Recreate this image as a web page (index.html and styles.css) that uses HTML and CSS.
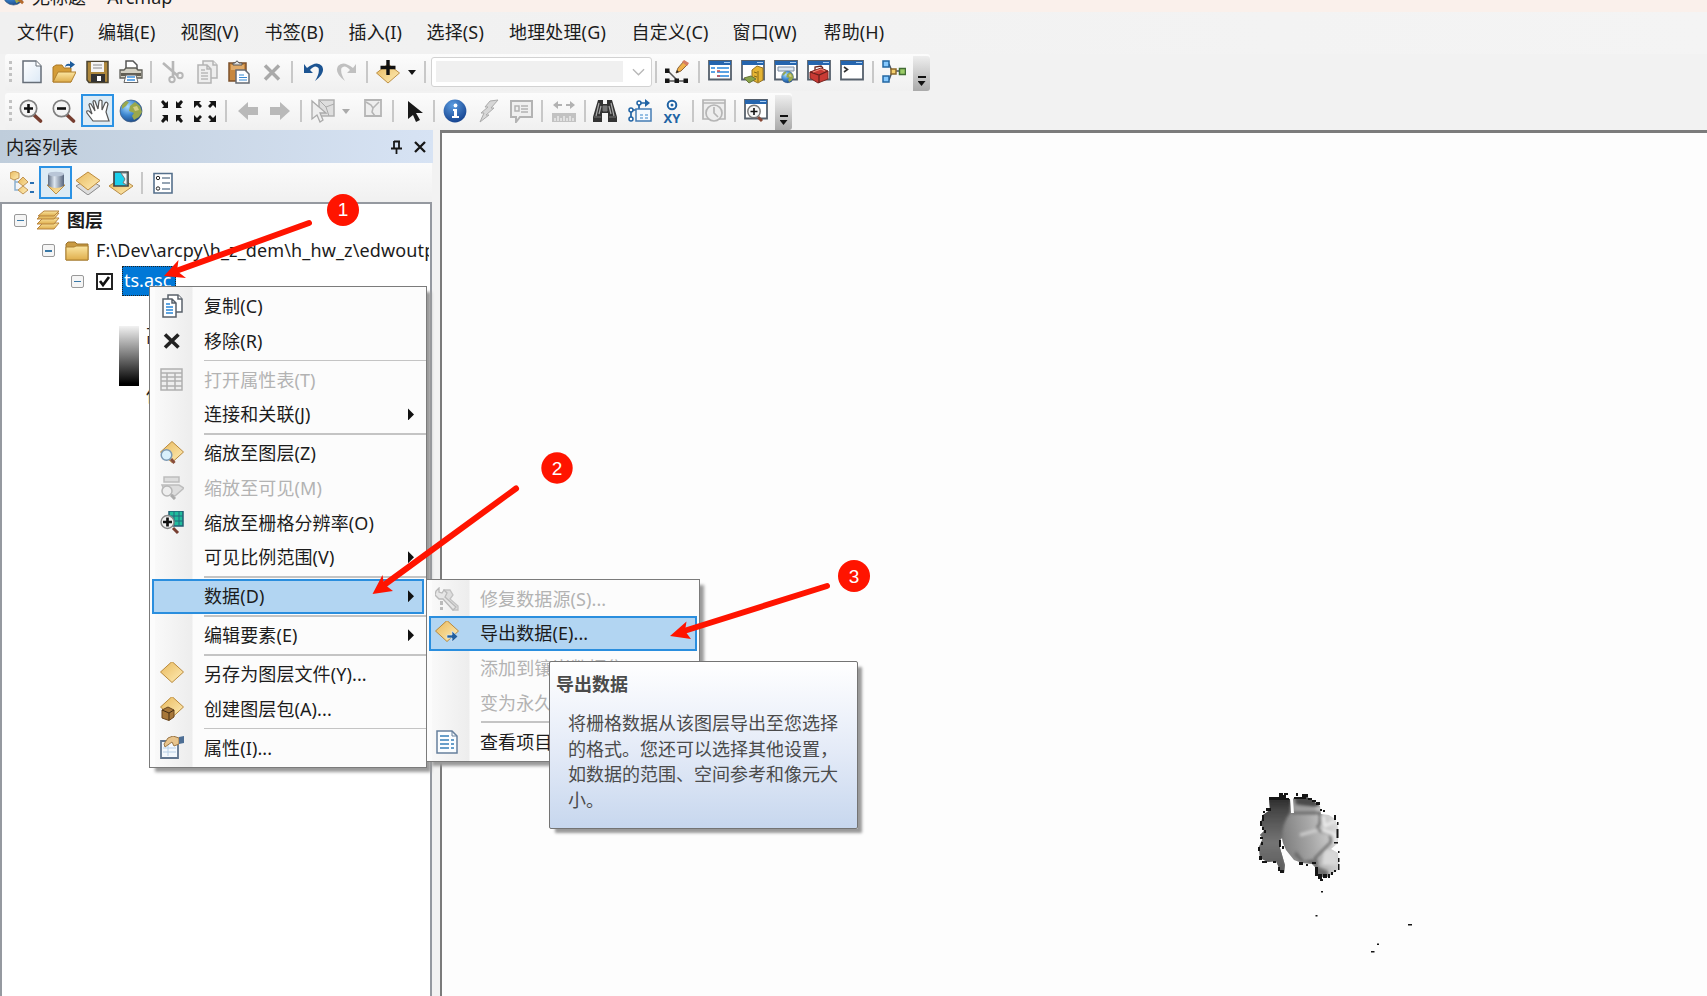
FILE: index.html
```html
<!DOCTYPE html>
<html lang="zh-CN">
<head>
<meta charset="utf-8">
<title>无标题 - Arcmap</title>
<link rel="stylesheet" href="styles.css">
</head>
<body>
<svg class="defs" width="0" height="0">
  <defs>
    <linearGradient id="gold" x1="0" y1="0" x2="1" y2="1"><stop offset="0" stop-color="#e8b85c"/><stop offset="1" stop-color="#ffeeb8"/></linearGradient>
    <linearGradient id="fold" x1="0" y1="0" x2="0" y2="1"><stop offset="0" stop-color="#fbe6a2"/><stop offset="1" stop-color="#dfae4c"/></linearGradient>
    <linearGradient id="paper" x1="0" y1="0" x2="1" y2="1"><stop offset="0" stop-color="#fff"/><stop offset="1" stop-color="#dce9f6"/></linearGradient>
    <linearGradient id="steel" x1="0" y1="0" x2="1" y2="0"><stop offset="0" stop-color="#5d6b80"/><stop offset=".4" stop-color="#dde6f0"/><stop offset="1" stop-color="#56657c"/></linearGradient>
    <radialGradient id="sea" cx=".35" cy=".3" r=".8"><stop offset="0" stop-color="#a9dcff"/><stop offset=".5" stop-color="#3d86cf"/><stop offset="1" stop-color="#153f7c"/></radialGradient>
    <radialGradient id="blue" cx=".4" cy=".25" r=".8"><stop offset="0" stop-color="#5a9be0"/><stop offset="1" stop-color="#123f8c"/></radialGradient>
    <symbol id="diamond" viewBox="0 0 24 24"><path d="M12 1.500 23.500 12 12 22.500 .5 12Z" fill="url(#gold)" stroke="#b8893c"/></symbol>
    <symbol id="globe" viewBox="0 0 24 24"><circle cx="12" cy="12" r="11" fill="url(#sea)" stroke="#3b587c" stroke-width=".7"/><path d="M11 7l5-4 5 4 2 6-3 5-5 3-2-4 2-3-5-2zM3 6l4-4 3 1-3 4-4 3z" fill="#9aa84c"/><path d="M14 8l4-1 2 4-4 1z" fill="#d4cf83"/></symbol>
    <symbol id="window" viewBox="0 0 24 24"><path d="M1 1H23V19.500H1Z" fill="#fff" stroke="#56606c" stroke-width="1.800"/><path d="M1 1H23V5H1Z" fill="#2565ae"/><path d="M16 2.500H22" stroke="#a9cdf2"/></symbol>
    <symbol id="lens" viewBox="0 0 24 24"><path d="M14 15 21.500 22" stroke="#773e30" stroke-width="3.600" stroke-linecap="round"/><circle cx="9.500" cy="9.500" r="8.200" fill="#f5f5f5" stroke="#808080" stroke-width="1.700"/></symbol>
    <symbol id="pages" viewBox="0 0 24 24"><path d="M8 1H18L22 5V18H8Z"/><path d="M3 5H12L16 9V23H3ZM12 5V9H16M18 1V5H22"/><path class="ink" d="M6 10H10M6 13H13M6 16H13M6 19H13"/></symbol>
  </defs>
</svg>

<div class="app">
  <header class="titlebar">
    <svg class="title-icon" viewBox="0 0 24 24"><use href="#globe"/><path d="M14 14 22 21" stroke="#b66b2d" stroke-width="3"/></svg>
    <span>无标题 - Arcmap</span>
  </header>

  <nav class="menubar">
    <span>文件(F)</span><span>编辑(E)</span><span>视图(V)</span><span>书签(B)</span><span>插入(I)</span><span>选择(S)</span><span>地理处理(G)</span><span>自定义(C)</span><span>窗口(W)</span><span>帮助(H)</span>
  </nav>

  <div class="toolbar standard">
    <i class="grip"></i>
    <svg class="ic" viewBox="0 0 24 24"><path d="M3 1H16L21 6V22.500H3Z" fill="url(#paper)" stroke="#666e78" stroke-width="1.500"/><path d="M16 1V6H21" fill="#fff" stroke="#666e78"/></svg>
    <svg class="ic" viewBox="0 0 24 24"><path d="M1 22V7L4 5H10L12 8H19V22Z" fill="#d49c37" stroke="#a97725"/><path d="M1 22 6 12H24L19 22Z" fill="url(#fold)" stroke="#b07f2c"/><path d="M13 7Q14 3 18 4V1L23 4.500 18 8.500V6Q15 5 13 7Z" fill="#1c5c9c"/></svg>
    <svg class="ic" viewBox="0 0 24 24"><path d="M1 1.500H22V22.500H3L1 20Z" fill="#ad873c" stroke="#4b432f" stroke-width="1.500"/><path d="M5 2H18V12H5Z" fill="#f5f5f5"/><path d="M7 5H16M7 8H16" stroke="#888"/><path d="M5 14H19V22H5Z" fill="#333"/><path d="M11 16H15V21H11Z" fill="#fff"/></svg>
    <svg class="ic" viewBox="0 0 24 24"><path d="M7 10V1H14L18 5V10" fill="#fff" stroke="#555" stroke-width="1.500"/><path d="M1 10H5L7 8H17L19 10H23V18H1Z" fill="#d4d1c4" stroke="#5e5d57" stroke-width="1.300"/><path d="M2 13H22V16H2Z" fill="#625f54"/><path d="M7 15H17L19 22.500H5Z" fill="#fff" stroke="#666"/><path d="M8 17H16M8 20H16" stroke="#3b8fdc" stroke-width="1.500"/></svg>
    <i class="sep"></i>
    <svg class="ic" viewBox="0 0 24 24" fill="none" stroke="#b7b7b7" stroke-width="2"><path d="M2 3 17 16M12 1 12 18" stroke-width="2.600"/><circle cx="11" cy="19.500" r="2.700"/><circle cx="19" cy="15.500" r="2.700"/></svg>
    <svg class="ic pages-off" viewBox="0 0 24 24"><use href="#pages"/></svg>
    <svg class="ic" viewBox="0 0 24 24"><path d="M2 3H19V21H2Z" fill="#c8873c" stroke="#7c512c" stroke-width="1.500"/><path d="M4 5H17V10H4Z" fill="#e0aa68"/><path d="M6 5V3H8Q10-1 12 3H15V5Z" fill="#ddd" stroke="#555"/><path d="M9 10H18L22 14V23H9Z" fill="#fff" stroke="#656b73" stroke-width="1.500"/><path d="M12 15H17M12 17.500H20M12 20H20" stroke="#3989d2" stroke-width="1.200"/></svg>
    <svg class="ic" viewBox="0 0 24 24"><path d="M5 5.500 19 19.500M19 5.500 5 19.500" stroke="#a9a9a9" stroke-width="3.500"/></svg>
    <i class="sep"></i>
    <svg class="ic" viewBox="0 0 24 24"><path d="M3 4V13H12L9 10Q14 4 17.500 8Q19 13 14 21Q25 13 21 6Q16 0 6 8Z" fill="#1c5492"/></svg>
    <svg class="ic" viewBox="0 0 24 24"><path d="M21 4V13H12L15 10Q10 4 6.500 8Q5 13 10 21Q-1 13 3 6Q8 0 18 8Z" fill="#c0c0c0"/></svg>
    <i class="sep"></i>
    <svg class="ic" viewBox="0 0 24 24"><path d="M12 4 23.500 13 12 23 .5 13Z" fill="url(#gold)" stroke="#bd9046"/><path d="M12 0V15M4.500 7.500H19.500" stroke="#111" stroke-width="3.400"/></svg>
    <i class="caret"></i>
    <i class="sep"></i>
    <div class="combo"><span></span><svg viewBox="0 0 14 10"><path d="M1 2 7 8 13 2" fill="none" stroke="#b8b8b8" stroke-width="1.500"/></svg></div>
    <i class="sep"></i>
    <svg class="ic" viewBox="0 0 24 24"><path d="M2 10 12 20M2 21H21" fill="none" stroke="#555" stroke-width="1.500"/><path d="M0 8.500H4.500V13H0ZM0 18.500H4.500V23H0ZM9.500 18.500H14V23H9.500ZM18.500 18.500H23V23H18.500Z" fill="#151515"/><path d="M11 13 13 8 19 1 23 4 16 11Z" fill="#f0b14a" stroke="#8c653b"/><path d="M19 0 24 3 22 6 17 2Z" fill="#d67d62"/><path d="M11 13 12 10 14 12Z" fill="#222"/></svg>
    <i class="sep"></i>
    <svg class="ic" viewBox="0 0 24 24"><use href="#window"/><path d="M3 8H7M9 8H21M9 12H21M9 16H21M3 12H7" stroke="#2685dc" stroke-width="1.600"/><path d="M9 11H12M9 16H12" stroke="#d14b4b" stroke-width="1.700"/></svg>
    <svg class="ic" viewBox="0 0 24 24"><use href="#window"/><path d="M11 10 16 6 22 8V20L17 23 11 20Z" fill="#e5b433" stroke="#967322"/><path d="M17 11V22M13 12 16 13M13 16 16 17" stroke="#856714"/><path d="M3 18 10 16 15 19 8 23Z" fill="#88a34a" stroke="#68743c"/></svg>
    <svg class="ic" viewBox="0 0 24 24"><use href="#window"/><path d="M4 7H20V11H4Z" fill="#dce7f2" stroke="#7c8ca1"/><use href="#globe" x="7" y="10.500" width="13" height="13"/></svg>
    <svg class="ic" viewBox="0 0 24 24"><use href="#window"/><path d="M3 12 14 8 21 11V19L11 23 3 18Z" fill="#c93a34" stroke="#7d2722"/><path d="M3 12 12 15 21 11M12 15V23M8 10V7L14 6 16 8" fill="none" stroke="#66211d" stroke-width="1.300"/><path d="M6 12 14 9 18 11" fill="none" stroke="#f18b78"/></svg>
    <svg class="ic" viewBox="0 0 24 24"><use href="#window"/><path d="M4 7 7.500 9.500 4 12" fill="none" stroke="#333" stroke-width="1.600"/></svg>
    <i class="sep"></i>
    <svg class="ic" viewBox="0 0 24 24"><path d="M7 4 10 11H19M7 20 10 12" fill="none" stroke="#4c5561" stroke-width="1.500"/><path d="M1 1H7V7H1ZM1 16H7V22H1Z" fill="#85c9ff" stroke="#2367a3" stroke-width="1.500"/><path d="M9 9H14V14H9Z" fill="#f4cf6c" stroke="#8b692c" stroke-width="1.500"/><path d="M17.500 8.500H23.500V14.500H17.500Z" fill="#9acb66" stroke="#426c35" stroke-width="1.500"/></svg>
    <i class="overflow"></i>
  </div>

  <div class="toolbar tools">
    <i class="grip"></i>
    <svg class="ic" viewBox="0 0 24 24"><use href="#lens"/><path d="M9.500 5V14M5 9.500H14" stroke="#111" stroke-width="2.600"/></svg>
    <svg class="ic" viewBox="0 0 24 24"><use href="#lens"/><path d="M5 9.500H14" stroke="#111" stroke-width="2.600"/></svg>
    <span class="pressed"><svg class="ic" viewBox="0 0 24 24"><path d="M7 22 1 14Q0 11 3 12L6 15 3 6Q3 4 5 5L9 12 7 3Q7 1 9 2L12 10 13 2Q14 0 16 2L16 11 19 4Q21 2 22 5L20 13 23 22Z" fill="#fff" stroke="#555" stroke-width="1.200"/></svg></span>
    <svg class="ic" viewBox="0 0 24 24"><use href="#globe"/></svg>
    <i class="sep"></i>
    <svg class="ic" viewBox="0 0 24 24" fill="#151515"><path id="corner-in" d="M1 3 3 1 6 4 8 2V9H2L4 7Z"/><use href="#corner-in" transform="matrix(-1 0 0 1 24 0)"/><use href="#corner-in" transform="matrix(1 0 0 -1 0 25)"/><use href="#corner-in" transform="matrix(-1 0 0 -1 24 25)"/></svg>
    <svg class="ic" viewBox="0 0 24 24" fill="#151515"><path id="corner-out" d="M1 2H8L6 4 9 7 7 9 4 6 1 9Z"/><use href="#corner-out" transform="matrix(-1 0 0 1 24 0)"/><use href="#corner-out" transform="matrix(1 0 0 -1 0 25)"/><use href="#corner-out" transform="matrix(-1 0 0 -1 24 25)"/></svg>
    <i class="sep"></i>
    <svg class="ic" viewBox="0 0 24 24"><path d="M2 12 12 3V8H22V16H12V21Z" fill="#b9b9b9"/></svg>
    <svg class="ic" viewBox="0 0 24 24"><path d="M22 12 12 3V8H2V16H12V21Z" fill="#b9b9b9"/></svg>
    <i class="sep"></i>
    <svg class="ic" viewBox="0 0 24 24"><path d="M8 1H23V17H8Z" fill="#dedede" stroke="#b0b0b0" stroke-width="1.500"/><path d="M8 1 15 8 23 5M15 8 18 17" fill="none" stroke="#aaa"/><path d="M1 2 15 14H9L12 21 9 23 6 16 1 20Z" fill="#eee" stroke="#aaa" stroke-width="1.300"/></svg>
    <i class="caret off"></i>
    <svg class="ic" viewBox="0 0 24 24"><path d="M4 1H20V17H4Z" fill="#eee" stroke="#b5b5b5" stroke-width="1.800"/><path d="M5 3 10 6 12 9 18 3M12 9 11 13 14 17" fill="none" stroke="#b5b5b5" stroke-width="1.500"/></svg>
    <i class="sep"></i>
    <svg class="ic" viewBox="0 0 24 24"><path d="M5 2 20 14H13L17 21 13 23 10 16 5 20Z" fill="#191919"/></svg>
    <i class="sep"></i>
    <svg class="ic" viewBox="0 0 24 24"><circle cx="12" cy="12" r="11.400" fill="url(#blue)"/><path d="M10 10H14V17H16V19H9V17H11V12H10Z" fill="#fff"/><circle cx="12.500" cy="6.500" r="1.900" fill="#fff"/></svg>
    <svg class="ic" viewBox="0 0 24 24"><path d="M13 2 21 1 14 9H17L9 16H12L3 23 7 14H4L11 8H8Z" fill="#d7d7d7" stroke="#ababab"/></svg>
    <svg class="ic" viewBox="0 0 24 24"><path d="M2 2H23V18H11L7 23V18H2Z" fill="#efefef" stroke="#b3b3b3" stroke-width="2"/><path d="M6 7H10V12H6ZM12 7H19M12 10H19M12 13H19" fill="none" stroke="#b3b3b3" stroke-width="1.500"/></svg>
    <i class="sep"></i>
    <svg class="ic" viewBox="0 0 24 24"><path d="M1 6 6 2V5H10V7H6V10ZM23 6 18 2V5H14V7H18V10Z" fill="#b2b2b2"/><path d="M0 14H24V23H0Z" fill="#c2c2c2"/><path d="M3 22V19M6 22V17M9 22V19M12 22V17M15 22V19M18 22V17M21 22V19" stroke="#fff"/></svg>
    <i class="sep"></i>
    <svg class="ic" viewBox="0 0 24 24"><path d="M5 1H10V5H14V1H19L24 18V23H15V14H9V23H0V18Z" fill="#333"/><path d="M6 4 3 17M18 4 21 17M8 7 6 15M16 7 18 15" stroke="#aaa" stroke-width="1.200"/><path d="M10 7H14V12H10ZM1 18H8M16 18H23" fill="#777" stroke="#777"/></svg>
    <svg class="ic" viewBox="0 0 24 24"><path d="M3 20V11H11V4H19" fill="none" stroke="#2063a4" stroke-width="1.700"/><path d="M17 0 22 4 17 8Z" fill="#2063a4"/><g fill="#fff" stroke="#2063a4" stroke-width="1.500"><circle cx="3" cy="20" r="2"/><circle cx="3" cy="11" r="2"/><circle cx="11" cy="4" r="2"/></g><path d="M8 10H23V22H8Z" fill="#f5faff" stroke="#447cb4" stroke-width="1.500"/><path d="M12 16H15M17 16H20M12 19H15M17 19H20" stroke="#3684c9"/></svg>
    <svg class="ic" viewBox="0 0 24 24"><circle cx="12" cy="6" r="4.300" fill="#fff" stroke="#2063a4" stroke-width="2"/><circle cx="12" cy="6" r="1.500" fill="#2063a4"/><text class="xy" x="12" y="23.500" text-anchor="middle">XY</text></svg>
    <i class="sep"></i>
    <svg class="ic" viewBox="0 0 24 24" fill="#eee" stroke="#b5b5b5" stroke-width="1.700"><path d="M1 1H23V20H1ZM1 4H23"/><circle cx="12" cy="14" r="8"/><path d="M12 8V14L16 18" fill="none"/></svg>
    <i class="sep"></i>
    <svg class="ic" viewBox="0 0 24 24"><use href="#window"/><path d="M14 18 18 22" stroke="#8a4938" stroke-width="3"/><circle cx="10" cy="12.500" r="6.200" fill="#f5f5f5" stroke="#777" stroke-width="1.400"/><path d="M10 9V16M6.500 12.500H13.500" stroke="#111" stroke-width="1.600"/></svg>
    <i class="overflow"></i>
  </div>

  <main class="workspace">
    <aside class="toc">
      <div class="toc-head"><span>内容列表</span>
        <svg class="pin" viewBox="0 0 12 14"><path d="M3 1V8M3 1.500H9M8 1V8M0 8.500H11M5.500 9V14" fill="none" stroke="#171717" stroke-width="1.800"/></svg>
        <svg class="close" viewBox="0 0 12 12"><path d="M1 1 11 11M11 1 1 11" stroke="#171717" stroke-width="2.300"/></svg>
      </div>
      <div class="toc-tools">
        <svg class="ic" viewBox="0 0 24 24"><path d="M5 8V19H12M5 11H12" fill="none" stroke="#8cb0d0" stroke-width="1.500"/><path d="M20 12H24M20 21H24" stroke="#2a70b2" stroke-width="2"/><g fill="url(#gold)" stroke="#c19555"><path d="M4 0 9 2V7L4 9 0 7V2Z"/><path d="M13 6 18 11 13 15 8 11ZM13 15 18 19 13 23 8 19Z"/></g></svg>
        <span class="pressed"><svg class="ic" viewBox="0 0 24 24"><path d="M3 14H21L12 23Z" fill="url(#gold)" stroke="#bd9046"/><path d="M4 3Q12-1 20 3V15Q12 19 4 15Z" fill="url(#steel)"/><ellipse cx="12" cy="3" rx="8" ry="2.300" fill="#b9c6d7"/></svg></span>
        <svg class="ic" viewBox="0 0 24 24"><path d="M0 15 12 24 24 15 12 8Z" fill="#ddd" stroke="#888"/><path d="M0 9.500 12 19 24 9.500 12 1Z" fill="url(#gold)" stroke="#bd8a3c"/></svg>
        <svg class="ic" viewBox="0 0 24 24"><path d="M0 15 12 23.500 24 15 18 11H6Z" fill="url(#gold)" stroke="#b78c48"/><path d="M5 1H19V15H5Z" fill="#1bd0ed" stroke="#444" stroke-width="1.700"/><path d="M12 2H18V14L14 12 16 8Z" fill="#eef3f5" stroke="#777"/></svg>
        <i class="sep"></i>
        <svg class="ic" viewBox="0 0 24 24"><path d="M3 2.500H21V22H3Z" fill="#fff" stroke="#55708c" stroke-width="1.600"/><path d="M11 7H19M11 12H19M11 18H19" stroke="#73879b" stroke-width="1.600"/><circle cx="7" cy="7" r="1.700" fill="none" stroke="#222"/><circle cx="7" cy="17.500" r="1.700" fill="none" stroke="#222"/></svg>
      </div>
      <div class="tree">
        <div class="row r1"><i class="minus"></i>
          <svg class="ic" viewBox="0 0 24 24"><g fill="url(#fold)" stroke="#b88540"><path d="M1 21 7 15H23L18 21Z"/><path d="M1 16 7 10H23L18 16Z"/><path d="M1 11 7 5H23L18 11Z"/><path d="M2 8 8 3H23L18 8Z"/></g></svg><b>图层</b></div>
        <div class="row r2"><i class="minus"></i>
          <svg class="ic" viewBox="0 0 24 24"><path d="M1 21V5L3 3H10L12 5H23V21Z" fill="#c99a42" stroke="#98702a"/><path d="M1 8H9L11 7H23V21H1Z" fill="url(#fold)" stroke="#ad8130"/></svg><span class="path">F:\Dev\arcpy\h_z_dem\h_hw_z\edwoutput</span></div>
        <div class="row r3"><i class="minus"></i>
          <svg class="check" viewBox="0 0 17 17"><path d="M1 1H16V16H1Z" fill="#fff" stroke="#222" stroke-width="2"/><path d="M4 8 7 12 13 4" fill="none" stroke="#111" stroke-width="2.700"/></svg><span class="selected">ts.asc</span></div>
        <div class="legend"><i class="ramp"></i><div><span>高</span><span>低</span></div></div>
      </div>
    </aside>
    <section class="map">
      <svg class="raster" viewBox="-10 -5 200 190">
        <defs>
          <linearGradient id="dem" gradientUnits="userSpaceOnUse" x1="30" y1="45" x2="88" y2="35"><stop offset="0" stop-color="#7d7d7d"/><stop offset=".5" stop-color="#a8a8a8"/><stop offset="1" stop-color="#dedede"/></linearGradient>
          <linearGradient id="west" x1="0" y1="0" x2="0" y2="1"><stop offset="0" stop-color="#1c1c1c"/><stop offset=".25" stop-color="#4a4a4a"/><stop offset=".6" stop-color="#747474"/><stop offset="1" stop-color="#555"/></linearGradient>
          <filter id="soft"><feGaussianBlur stdDeviation="1.500"/></filter>
          <clipPath id="land"><path d="M19 13H29V10H36V14H40L41 28H44L43 14 45 12H57L62 15 70 21 71 29 79 30 85 34 88 42V58L81 64 88 68 89 84 83 88 78 92 69 92 66 83 62 79 52 78 44 75 36 65 33 58 32 53 30 55V63L35 80 34 88 30 85 26 76 18 77 10 73 9 62 13 53 10 50 14 46 11 38 13 30 20 25Z"/></clipPath>
        </defs>
        <g clip-path="url(#land)">
          <path d="M0 0H100V100H0Z" fill="url(#dem)"/>
          <g filter="url(#soft)">
            <path d="M0 6H42L40 28Q32 38 32 52L36 92H0Z" fill="url(#west)"/>
            <path d="M44 8H60L70 20 64 22 46 20Z" fill="#4c4c4c"/>
            <path d="M46 20 66 24V29H44Z" fill="#9d9d9d"/>
            <path d="M44 70 50 76 64 80 66 92H78V86L68 82 64 74 54 76 46 66Z" fill="#6b6b6b"/>
            <path d="M74 64 86 66 88 80 72 80Z" fill="#d8d8d8"/>
          </g>
          <g fill="none" filter="url(#soft)"><path d="M42 28H70V38L67 43 70 46 80 49 81 57 73 65 65 73 67 79" stroke="#5a5a5a" stroke-width="2"/><path d="M73 31 75 41 85 36M72 45 86 50V60" stroke="#ececec" stroke-width="3"/><path d="M50 50 68 45" stroke="#cfcfcf" stroke-width="3"/></g>
        </g>
        <path d="M19 12H29V10H36V13H39V15H19ZM29 8H33V10H29ZM34 8H38V10H34ZM46 8H48V11H46ZM52 9H58V12H52ZM44 12H56V14H44ZM58 13H62V15H58ZM62 15H66V17H62ZM66 17H70V20H66ZM70 24H72V26H70ZM73 25H75V27H73ZM16 23H21V26H16ZM13 26H15V28H13ZM12 30H14V36H12ZM10 36H12V41H10ZM12 42H14V45H12ZM14 45H16V48H14ZM10 52H13V54H10ZM11 57H13V60H11ZM8 62H10V66H8ZM9 71H12V75H9ZM12 76H17V78H12ZM23 76H26V78H23ZM28 82H30V86H28ZM30 85H34V88H30ZM29 55H31V62H29ZM32 61H34V64H32ZM49 77H53V80H49ZM56 79H58V81H56ZM62 77H66V79H62ZM65 82H68V91H65ZM68 89H72V94H68ZM73 89H77V93H73ZM70 94H73V96H70ZM78 89H80V93H78ZM81 87H83V90H81ZM84 85H86V87H84ZM88 66H89.500V68H88ZM88 73H89.500V77H88ZM88 79H89.500V85H88ZM84 30H86V35H84ZM87 37H88.500V40H87ZM86.500 44H88.500V53H86.500ZM84 57H88V58.500H84Z" fill="#151515"/>
        <path d="M71 106H73V107.500H71ZM65.500 130H67.500V131.500H65.500ZM158 139H162V140.500H158ZM127 158.500H129V160H127ZM121 166H124.500V167.500H121Z" fill="#151515"/>
      </svg>
    </section>
  </main>

  <div class="menu context">
    <div class="item"><svg class="ic pages-on" viewBox="0 0 24 24"><use href="#pages"/></svg>复制(C)</div>
    <div class="item"><svg class="ic" viewBox="0 0 24 24"><path d="M5 5.500 18.500 18.500M18.500 5.500 5 18.500" stroke="#222" stroke-width="3.600"/></svg>移除(R)</div>
    <hr>
    <div class="item off"><svg class="ic" viewBox="0 0 24 24"><path d="M1 1H22V22H1ZM1 5H22M1 9H22M1 13H22M1 18H22M7 5V22M15 5V22" fill="#eee" stroke="#b0b0b0" stroke-width="1.500"/></svg>打开属性表(T)</div>
    <div class="item"><i class="ic"></i>连接和关联(J)<i class="more"></i></div>
    <hr>
    <div class="item"><svg class="ic" viewBox="0 0 24 24"><use href="#diamond" y="-1"/><path d="M11 18 14.500 22" stroke="#884d3c" stroke-width="3"/><circle cx="6.500" cy="14" r="5.300" fill="#d9f0fb" stroke="#7b98b2" stroke-width="1.500"/></svg>缩放至图层(Z)</div>
    <div class="item off"><svg class="ic" viewBox="0 0 24 24"><path d="M4 1H19V6H4ZM2 9H19L24 12 15 20 5 16Z" fill="#ddd" stroke="#bdbdbd" stroke-width="1.500"/><path d="M11 19 15 23" stroke="#aaa" stroke-width="3"/><circle cx="7" cy="15" r="5" fill="#eee" stroke="#b6b6b6" stroke-width="1.500"/></svg>缩放至可见(M)</div>
    <div class="item"><svg class="ic" viewBox="0 0 24 24"><path d="M9 0H23V15H9Z" fill="#20bd9c" stroke="#235c72" stroke-width="1.500"/><path d="M14 0V15M19 0V15M9 5H23M9 10H23" stroke="#24677c"/><path d="M13 17 18 22" stroke="#773e30" stroke-width="3"/><circle cx="7.500" cy="11" r="6.500" fill="#f1f1f1" stroke="#888" stroke-width="1.400"/><path d="M7.500 6.500V15.500M3 11H12" stroke="#111" stroke-width="2.700"/></svg>缩放至栅格分辨率(O)</div>
    <div class="item"><i class="ic"></i>可见比例范围(V)<i class="more"></i></div>
    <hr>
    <div class="item active"><i class="ic"></i>数据(D)<i class="more"></i></div>
    <hr>
    <div class="item"><i class="ic"></i>编辑要素(E)<i class="more"></i></div>
    <hr>
    <div class="item"><svg class="ic" viewBox="0 0 24 24"><use href="#diamond" y="-2"/></svg>另存为图层文件(Y)...</div>
    <div class="item"><svg class="ic" viewBox="0 0 24 24"><use href="#diamond" y="-2"/><path d="M2 13 8 10 14 13V20L9 23.500 2 21Z" fill="#a77739" stroke="#68451f"/><path d="M2 13 9 16 14 13M9 16V23" fill="none" stroke="#422c14"/></svg>创建图层包(A)...</div>
    <hr>
    <div class="item"><svg class="ic" viewBox="0 0 24 24"><path d="M1 5H18V22H1Z" fill="#f3f8fd" stroke="#60758f" stroke-width="1.800"/><path d="M3 12H16M3 16H16M8 9V20" stroke="#b5cee6"/><path d="M4 8 8 2 13 0 19 2V8L14 10 12 6 5 11Z" fill="#e8c48c" stroke="#9a7645"/><path d="M19 1 24 0V7L19 8Z" fill="#4d6e94"/></svg>属性(I)...</div>
  </div>

  <div class="menu sub">
    <div class="item off"><svg class="ic" viewBox="0 0 24 24"><path d="M9 3 15 3 18 8 15 12 23 19V23H18L9 12Z" fill="#ddd" stroke="#c2c2c2" stroke-width="1.300"/><path d="M4 1V5L7 6 9 3 12 6 10 10 21 20 18 23 8 12H4L0 8 1 4Z" fill="#e6e6e6" stroke="#b9b9b9" stroke-width="1.300"/><path d="M5 14H8V18H5ZM5 20H8V23H5Z" fill="#bbb"/></svg>修复数据源(S)...</div>
    <div class="item active"><svg class="ic" viewBox="0 0 24 24"><use href="#diamond" y="-2"/><path d="M12 14H17V10L23 15.500 17 21V17H12Z" fill="#225f9e" stroke="#d8e8f4" stroke-width=".7"/></svg>导出数据(E)...</div>
    <div class="item off"><i class="ic"></i>添加到镶嵌数据集</div>
    <div class="item off"><i class="ic"></i>变为永久</div>
    <hr>
    <div class="item"><svg class="ic" viewBox="0 0 24 24"><path d="M2 1H17L22 6V23H2Z" fill="#fafdff" stroke="#67809d" stroke-width="1.500"/><path d="M17 1V6H22" fill="none" stroke="#67809d"/><path d="M5 6H14M5 10H14M5 14H14M5 18H14M16 10H19M16 14H19M16 18H19" stroke="#367fb9" stroke-width="1.300"/></svg>查看项目</div>
  </div>

  <div class="tooltip"><b>导出数据</b><p>将栅格数据从该图层导出至您选择<br>的格式。您还可以选择其他设置，<br>如数据的范围、空间参考和像元大<br>小。</p></div>

  <svg class="notes" viewBox="0 0 1707 996">
    <path d="M309 223 176 271M516 488.500 384 585M827 586 684 631" stroke="#ff1400" stroke-width="6" stroke-linecap="round"/>
    <g fill="#ff1400"><path d="M164 276 178.500 260 177 271 186 278Z"/><path d="M372.500 594 382.500 575 384 584 393 591Z"/><path d="M670 636 686.500 621.500 685 631 691 639Z"/><circle cx="343" cy="210" r="16"/><circle cx="557" cy="468" r="15.700"/><circle cx="854" cy="576" r="16"/></g>
    <g class="nums"><text x="343" y="216">1</text><text x="557" y="475">2</text><text x="854" y="583">3</text></g>
  </svg>
</div>
</body>
</html>
```
FILE: styles.css
```css
* { box-sizing: border-box; }
body {
  margin: 0;
  overflow: hidden;
  font: 18px/24px "Noto Sans", "Noto Sans CJK SC", sans-serif;
  color: #1c1c1c;
}
.defs { position: absolute; }
.app {
  position: relative;
  width: 1707px;
  height: 996px;
  display: flex;
  flex-direction: column;
  overflow: hidden;
  background: #f2f2f2;
}
.titlebar {
  height: 12px;
  flex: none;
  display: flex;
  align-items: flex-end;
  gap: 7px;
  padding: 0 0 6px 2px;
  overflow: hidden;
  background: #faf0eb;
  white-space: pre;
}
.title-icon { width: 23px; height: 23px; flex: none; }
.titlebar span { margin-bottom: -3px; word-spacing: 3px; }

.menubar {
  height: 42px;
  flex: none;
  display: grid;
  grid-template-columns: 81px 82.500px 84px 84px 78px 82.500px 122.500px 101px 91px 80px;
  align-items: center;
  padding: 0 0 2px 17px;
  background: linear-gradient(90deg, #f0f0f0, #f4f4f4);
  letter-spacing: .15px;
  white-space: nowrap;
}

.toolbar {
  height: 37px;
  flex: none;
  display: grid;
  align-items: center;
  margin-left: 5px;
  padding: 0 0 2px 4px;
  background: linear-gradient(#fcfcfc, #f0f0f0);
  border-radius: 3px;
}
.standard {
  width: 925px;
  margin-bottom: 2px;
  grid-template-columns: 11px 32px 34px 33px 31px 11px 34px 32px 33px 31px 10px 34px 31px 10px 32px 16px 7px 224px 10px 33px 10px 33px 33px 33px 33px 32px 10px 31px 17px;
}
.tools {
  width: 787px;
  grid-template-columns: 10px 33px 29px 38px 31px 10px 33px 32px 11px 32px 32px 11px 31px 19px 31px 11px 30px 10px 34px 32px 32px 11px 32px 9px 35px 32px 32px 10px 32px 10px 31px 17px;
}
.ic { width: 24px; height: 24px; display: block; flex: none; }
.grip {
  width: 3px;
  height: 22px;
  background: repeating-linear-gradient(#c2c2c2 0 3px, transparent 3px 6px);
}
.sep { width: 2px; height: 22px; background: #c8c8c8; }
.caret {
  width: 8px;
  height: 5px;
  margin-top: 2px;
  background: #151515;
  clip-path: polygon(0 0, 100% 0, 50% 100%);
}
.caret.off { background: #aaa; }
.pressed {
  width: 33px;
  height: 33px;
  display: grid;
  place-items: center;
  border: 2px solid #2b92e4;
  background: #dcebf5;
}
.combo {
  width: 221px;
  height: 30px;
  display: flex;
  align-items: center;
  gap: 9px;
  padding: 4px;
  border: 1.500px solid #d2d2d2;
  border-radius: 3px;
  background: #fff;
}
.combo span { width: 187px; height: 21px; background: #f0f0f0; }
.combo svg { width: 13px; height: 10px; }
.overflow {
  width: 17px;
  height: 35px;
  align-self: end;
  display: grid;
  justify-items: center;
  align-content: end;
  gap: 3px;
  margin-bottom: -2px;
  padding-bottom: 5px;
  background: linear-gradient(#eee, #aaa);
  border-radius: 0 3px 3px 0;
}
.overflow::before { content: ""; width: 8px; height: 2px; background: #111; }
.overflow::after {
  content: "";
  width: 8px;
  height: 5px;
  background: #111;
  clip-path: polygon(0 0, 100% 0, 50% 100%);
}
.xy { font: bold 13px "Noto Sans", sans-serif; fill: #2063a4; }
.pages-on { fill: #fff; stroke: #59616b; stroke-width: 1.500; --ink: #2a86d6; }
.pages-off { fill: #eee; stroke: #b4b4b4; stroke-width: 1.500; --ink: #b9b9b9; }
.ink { stroke: var(--ink); }

.workspace { flex: 1; min-height: 0; display: flex; gap: 8px; }
.toc { width: 432px; display: flex; flex-direction: column; }
.toc-head {
  height: 33px;
  width: 433px;
  flex: none;
  display: flex;
  align-items: center;
  padding: 0 7px 0 6px;
  background: linear-gradient(90deg, #bfcddb, #d7e3f4);
}
.pin { width: 12px; height: 14px; margin-left: auto; }
.close { width: 12px; height: 12px; margin-left: 11px; }
.toc-tools {
  height: 39px;
  flex: none;
  display: grid;
  grid-template-columns: 29px 37px 33px 32px 10px 24px;
  align-items: center;
  padding-left: 10px;
  background: linear-gradient(#fbfbfb, #f0f0f0);
}
.tree {
  flex: 1;
  border: 2px solid #9599a0;
  border-bottom: 0;
  background: #fff;
  overflow: hidden;
  padding-top: 1px;
}
.row { height: 30.500px; display: flex; align-items: center; white-space: nowrap; }
.row .ic { margin: 0 7px 0 9px; }
.r1 { padding-left: 12px; }
.r2 { padding-left: 40px; }
.r2 .ic { margin: 0 7px 0 10px; }
.r3 { padding-left: 69px; }
.minus {
  width: 13px;
  height: 13px;
  flex: none;
  display: grid;
  place-items: center;
  border: 1.500px solid #999;
  border-radius: 2px;
  background: #f5f5f5;
}
.minus::after { content: ""; width: 7px; height: 1.500px; background: #3979a8; }
.path { width: 333px; overflow: hidden; margin-top: -2px; letter-spacing: .13px; }
.check { width: 17px; height: 17px; margin: 0 9px 0 12px; }
.selected {
  height: 30px;
  width: 54px;
  padding: 1px 1px;
  border: 1px dotted #ffb45f;
  outline: 1px dotted #222;
  outline-offset: -1px;
  background: #0078d7;
  color: #fff;
}
.legend { display: flex; gap: 7px; padding: 29px 0 0 117px; }
.ramp { width: 20px; height: 60px; background: linear-gradient(#f2f2f2, #777 50%, #000 96%); }
.legend div { display: flex; flex-direction: column; justify-content: space-between; height: 84px; margin-top: -3px; }

.map {
  flex: 1;
  display: flex;
  justify-content: flex-end;
  align-items: flex-end;
  padding: 0 267px 26px 0;
  border: solid #7b7b7b;
  border-width: 3px 0 0 2px;
  background: #fdfdfd;
}
.raster { width: 200px; height: 190px; }

.menu {
  position: absolute;
  display: flex;
  flex-direction: column;
  border: 1.500px solid #7b7b7b;
  background: linear-gradient(90deg, #fcfcfc 5px, #f9f9f9 5px, #ededed 42px, #fcfcfc 43px);
  box-shadow: 5px 5px 3px -1px #9a9a9a;
  letter-spacing: .1px;
}
.context { left: 149px; top: 286px; width: 278px; height: 482px; padding: 2px 0; }
.sub { left: 426px; top: 579px; width: 274px; height: 183px; padding: 1.500px 0; }
.item {
  height: 34.600px;
  flex: none;
  display: flex;
  align-items: center;
  margin: 0 2px;
  padding: 0 9px 0 7px;
  border: 1.500px solid transparent;
  white-space: nowrap;
}
.item .ic { margin-right: 20px; }
.sub .item { padding-left: 5px; }
.sub .item .ic { margin-right: 21px; }
.item.off { color: #b3b3b3; }
.menu .item.active {
  background: #b2d5f2;
  border: 2px solid #2a8ede;
  padding-right: 8px;
  padding-left: 6px;
}
.menu.sub .item.active { padding-left: 4px; }
.menu hr {
  flex: none;
  width: auto;
  height: 1.500px;
  margin: 1.500px 0 1.400px 54px;
  border: 0;
  background: #c4c4c4;
}
.more {
  width: 6px;
  height: 12px;
  margin-left: auto;
  background: #111;
  clip-path: polygon(0 0, 100% 50%, 0 100%);
}

.tooltip {
  position: absolute;
  left: 549px;
  top: 661px;
  width: 309px;
  height: 168px;
  padding: 10px 6px;
  border: 1.500px solid #747474;
  border-radius: 2px;
  background: linear-gradient(#fff, #e3eaf7 55%, #c7d7ee);
  box-shadow: 5px 5px 3px -1px #999;
  color: #4b4b4b;
}
.tooltip b { font-weight: 600; }
.tooltip p { margin: 15px 0 0 12px; line-height: 25.700px; white-space: nowrap; }
.notes { position: absolute; inset: 0; width: 1707px; height: 996px; }
.nums { font: 19px "Liberation Sans", sans-serif; fill: #fff; text-anchor: middle; }
```
